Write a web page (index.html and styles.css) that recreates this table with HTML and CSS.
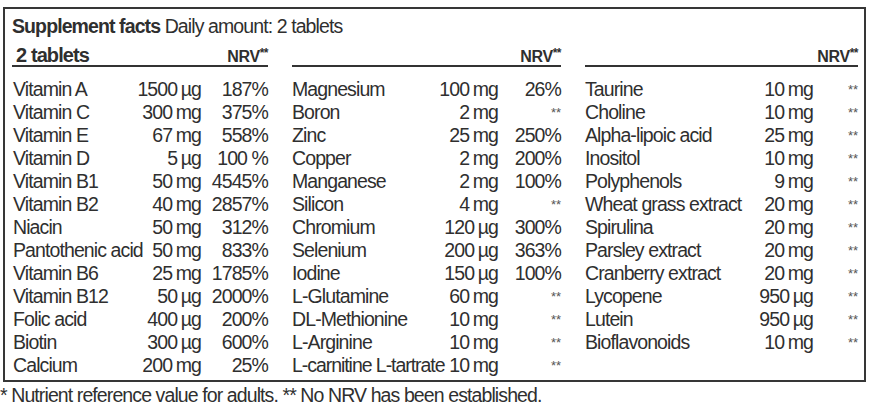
FILE: index.html
```html
<!DOCTYPE html>
<html>
<head>
<meta charset="utf-8">
<link rel="stylesheet" href="styles.css">
</head>
<body>
<div class="panel">
  <div class="title"><b>Supplement facts</b> Daily amount: 2 tablets</div>
  <div class="cols">
    <div class="col c1">
      <div class="col-head"><span class="amt-head">2 tablets</span><span class="nrv-head">NRV<span class="sup">**</span></span></div>
      <div class="rows">
        <div class="row"><span>Vitamin A</span><span class="amt">1500 µg</span><span class="nrv">187%</span></div>
        <div class="row"><span>Vitamin C</span><span class="amt">300 mg</span><span class="nrv">375%</span></div>
        <div class="row"><span>Vitamin E</span><span class="amt">67 mg</span><span class="nrv">558%</span></div>
        <div class="row"><span>Vitamin D</span><span class="amt">5 µg</span><span class="nrv">100 %</span></div>
        <div class="row"><span>Vitamin B1</span><span class="amt">50 mg</span><span class="nrv">4545%</span></div>
        <div class="row"><span>Vitamin B2</span><span class="amt">40 mg</span><span class="nrv">2857%</span></div>
        <div class="row"><span>Niacin</span><span class="amt">50 mg</span><span class="nrv">312%</span></div>
        <div class="row"><span>Pantothenic acid</span><span class="amt">50 mg</span><span class="nrv">833%</span></div>
        <div class="row"><span>Vitamin B6</span><span class="amt">25 mg</span><span class="nrv">1785%</span></div>
        <div class="row"><span>Vitamin B12</span><span class="amt">50 µg</span><span class="nrv">2000%</span></div>
        <div class="row"><span>Folic acid</span><span class="amt">400 µg</span><span class="nrv">200%</span></div>
        <div class="row"><span>Biotin</span><span class="amt">300 µg</span><span class="nrv">600%</span></div>
        <div class="row"><span>Calcium</span><span class="amt">200 mg</span><span class="nrv">25%</span></div>
      </div>
    </div>
    <div class="col c2">
      <div class="col-head"><span></span><span class="nrv-head">NRV<span class="sup">**</span></span></div>
      <div class="rows">
        <div class="row"><span>Magnesium</span><span class="amt">100 mg</span><span class="nrv">26%</span></div>
        <div class="row"><span>Boron</span><span class="amt">2 mg</span><span class="nrv"><span class="na">**</span></span></div>
        <div class="row"><span>Zinc</span><span class="amt">25 mg</span><span class="nrv">250%</span></div>
        <div class="row"><span>Copper</span><span class="amt">2 mg</span><span class="nrv">200%</span></div>
        <div class="row"><span>Manganese</span><span class="amt">2 mg</span><span class="nrv">100%</span></div>
        <div class="row"><span>Silicon</span><span class="amt">4 mg</span><span class="nrv"><span class="na">**</span></span></div>
        <div class="row"><span>Chromium</span><span class="amt">120 µg</span><span class="nrv">300%</span></div>
        <div class="row"><span>Selenium</span><span class="amt">200 µg</span><span class="nrv">363%</span></div>
        <div class="row"><span>Iodine</span><span class="amt">150 µg</span><span class="nrv">100%</span></div>
        <div class="row"><span>L-Glutamine</span><span class="amt">60 mg</span><span class="nrv"><span class="na">**</span></span></div>
        <div class="row"><span>DL-Methionine</span><span class="amt">10 mg</span><span class="nrv"><span class="na">**</span></span></div>
        <div class="row"><span>L-Arginine</span><span class="amt">10 mg</span><span class="nrv"><span class="na">**</span></span></div>
        <div class="row"><span class="tight">L-carnitine L-tartrate</span><span class="amt">10 mg</span><span class="nrv"><span class="na">**</span></span></div>
      </div>
    </div>
    <div class="col c3">
      <div class="col-head"><span></span><span class="nrv-head">NRV<span class="sup">**</span></span></div>
      <div class="rows">
        <div class="row"><span>Taurine</span><span class="amt">10 mg</span><span class="nrv"><span class="na">**</span></span></div>
        <div class="row"><span>Choline</span><span class="amt">10 mg</span><span class="nrv"><span class="na">**</span></span></div>
        <div class="row"><span>Alpha-lipoic acid</span><span class="amt">25 mg</span><span class="nrv"><span class="na">**</span></span></div>
        <div class="row"><span>Inositol</span><span class="amt">10 mg</span><span class="nrv"><span class="na">**</span></span></div>
        <div class="row"><span>Polyphenols</span><span class="amt">9 mg</span><span class="nrv"><span class="na">**</span></span></div>
        <div class="row"><span>Wheat grass extract</span><span class="amt">20 mg</span><span class="nrv"><span class="na">**</span></span></div>
        <div class="row"><span>Spirulina</span><span class="amt">20 mg</span><span class="nrv"><span class="na">**</span></span></div>
        <div class="row"><span>Parsley extract</span><span class="amt">20 mg</span><span class="nrv"><span class="na">**</span></span></div>
        <div class="row"><span>Cranberry extract</span><span class="amt">20 mg</span><span class="nrv"><span class="na">**</span></span></div>
        <div class="row"><span>Lycopene</span><span class="amt">950 µg</span><span class="nrv"><span class="na">**</span></span></div>
        <div class="row"><span>Lutein</span><span class="amt">950 µg</span><span class="nrv"><span class="na">**</span></span></div>
        <div class="row"><span>Bioflavonoids</span><span class="amt">10 mg</span><span class="nrv"><span class="na">**</span></span></div>
      </div>
    </div>
  </div>
</div>
<div class="footer">* Nutrient reference value for adults. ** No NRV has been established.</div>
</body>
</html>
```
FILE: styles.css
```css
body {
  margin: 0;
  background: #ffffff;
  color: #2f2f2f;
  font-family: "Liberation Sans", Arial, sans-serif;
  font-size: 19.5px;
  letter-spacing: -0.9px;
}

.panel {
  margin: 7px 3px 0 3px;
  height: 375px;
  box-sizing: border-box;
  border: 2px solid #363636;
  padding: 6px 6px 0 7px;
}

.title {
  line-height: 23px;
  height: 23px;
  white-space: nowrap;
}

.cols {
  display: grid;
  grid-template-columns: 256px 269px 273px;
  column-gap: 24px;
  margin-top: 4px;
}

.col-head {
  display: flex;
  justify-content: space-between;
  align-items: baseline;
  line-height: 23px;
  height: 23px;
  border-bottom: 2px solid #333333;
}

.amt-head {
  font-weight: bold;
  font-size: 20px;
  padding-left: 4px;
}

.nrv-head {
  font-weight: bold;
  font-size: 16px;
  letter-spacing: -0.4px;
}

.sup {
  font-size: 12px;
  vertical-align: 5px;
  letter-spacing: -0.5px;
}

.rows {
  margin-top: 11px;
}

.row {
  display: grid;
  line-height: 23px;
  height: 23px;
  white-space: nowrap;
}

.c1 .row {
  grid-template-columns: minmax(0, 1fr) 80px 67px;
  padding-left: 1px;
}

.c2 .row {
  grid-template-columns: minmax(0, 1fr) 70px 63px;
}

.c3 .row {
  grid-template-columns: minmax(0, 1fr) 80px 45px;
}

.amt,
.nrv {
  text-align: right;
}

.amt {
  word-spacing: -1px;
}

.tight {
  letter-spacing: -1.05px;
}

.na {
  font-size: 13px;
  color: #555555;
  letter-spacing: 0;
  vertical-align: 4px;
}

.footer {
  line-height: 23px;
  white-space: nowrap;
  padding-top: 2px;
}
```
